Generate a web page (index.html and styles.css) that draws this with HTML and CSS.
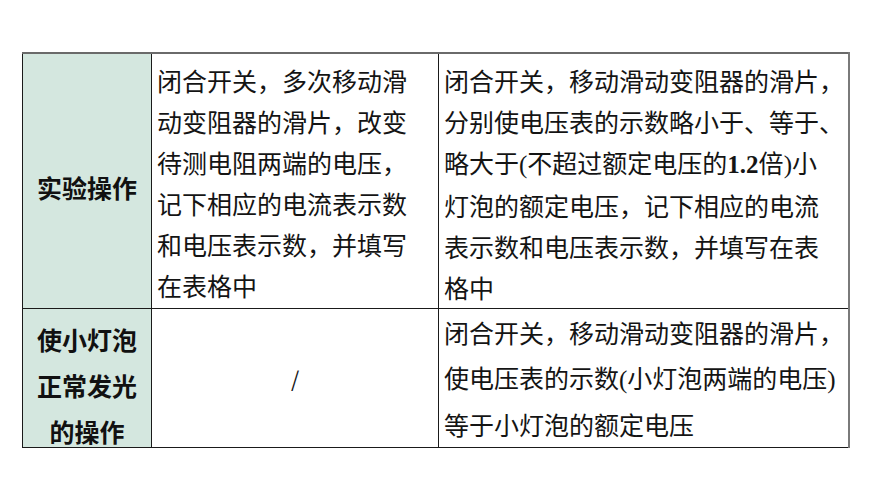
FILE: index.html
```html
<!DOCTYPE html>
<html lang="zh-CN">
<head>
<meta charset="utf-8">
<title>实验操作</title>
<link rel="stylesheet" href="styles.css">
</head>
<body>
<div class="page">
  <table class="sheet">
    <colgroup>
      <col class="c1">
      <col class="c2">
      <col class="c3">
    </colgroup>
    <tr class="row-a">
      <th class="head">实验操作</th>
      <td class="cell">闭合开关，多次移动滑<br>动变阻器的滑片，改变<br>待测电阻两端的电压，<br>记下相应的电流表示数<br>和电压表示数，并填写<br>在表格中</td>
      <td class="cell">闭合开关，移动滑动变阻器的滑片，<br>分别使电压表的示数略小于、等于、<br>略大于<span class="lat">(</span>不超过额定电压的<b class="lat">1.2</b>倍<span class="lat">)</span>小<br>灯泡的额定电压，记下相应的电流<br>表示数和电压表示数，并填写在表<br>格中</td>
    </tr>
    <tr class="row-b">
      <th class="head"><div class="head-inner">使小灯泡<br>正常发光<br>的操作</div></th>
      <td class="cell slash">/</td>
      <td class="cell">闭合开关，移动滑动变阻器的滑片，<br>使电压表的示数<span class="lat">(</span>小灯泡两端的电压<span class="lat">)</span><br>等于小灯泡的额定电压</td>
    </tr>
  </table>
</div>
</body>
</html>
```

FILE: styles.css
```css
html, body {
  margin: 0;
  padding: 0;
  background: #ffffff;
}

.page {
  padding: 52px 0 0 22px;
}

.sheet {
  border-collapse: collapse;
  table-layout: fixed;
  width: 826px;
  color: #141414;
  font-family: "Noto Sans CJK SC", "Noto Sans", sans-serif;
  font-size: 25px;
  border-top: 2px solid #6a6a6a;
  border-right: 2px solid #7a7a7a;
  border-left: 1px solid #111;
  border-bottom: 1px solid #111;
}

.c1 { width: 129px; }
.c2 { width: 287px; }
.c3 { width: 410px; }

.sheet th,
.sheet td {
  border: 1px solid #1a1a1a;
  vertical-align: top;
  padding: 0;
}

.sheet tr:first-child th,
.sheet tr:first-child td {
  border-top: 2px solid #6a6a6a;
}

.sheet td:last-child {
  border-right: 2px solid #7a7a7a;
}

.head {
  background: #d4e7df;
  font-weight: bold;
  text-align: center;
  vertical-align: middle !important;
  color: #111;
}

.cell {
  text-align: left;
  padding-left: 5px !important;
  font-weight: normal;
  white-space: nowrap;
}

.row-a {
  height: 255px;
}

.row-a .cell {
  line-height: 41px;
  padding-top: 6px !important;
}

.row-a .head {
  padding-top: 12px;
  line-height: 41px;
}

.row-b {
  height: 137px;
}

.row-b .cell {
  line-height: 45px;
  padding-top: 1px !important;
}

.row-b .head {
  vertical-align: top !important;
}

.head-inner {
  line-height: 46px;
  padding-top: 7px;
  margin-bottom: -12px;
}

.slash {
  text-align: center;
  vertical-align: middle !important;
  font-size: 21px;
  padding-top: 10px !important;
  padding-left: 0 !important;
}

.lat {
  font-family: "Liberation Serif", "Times New Roman", serif;
}

b.lat {
  font-weight: bold;
}
```
